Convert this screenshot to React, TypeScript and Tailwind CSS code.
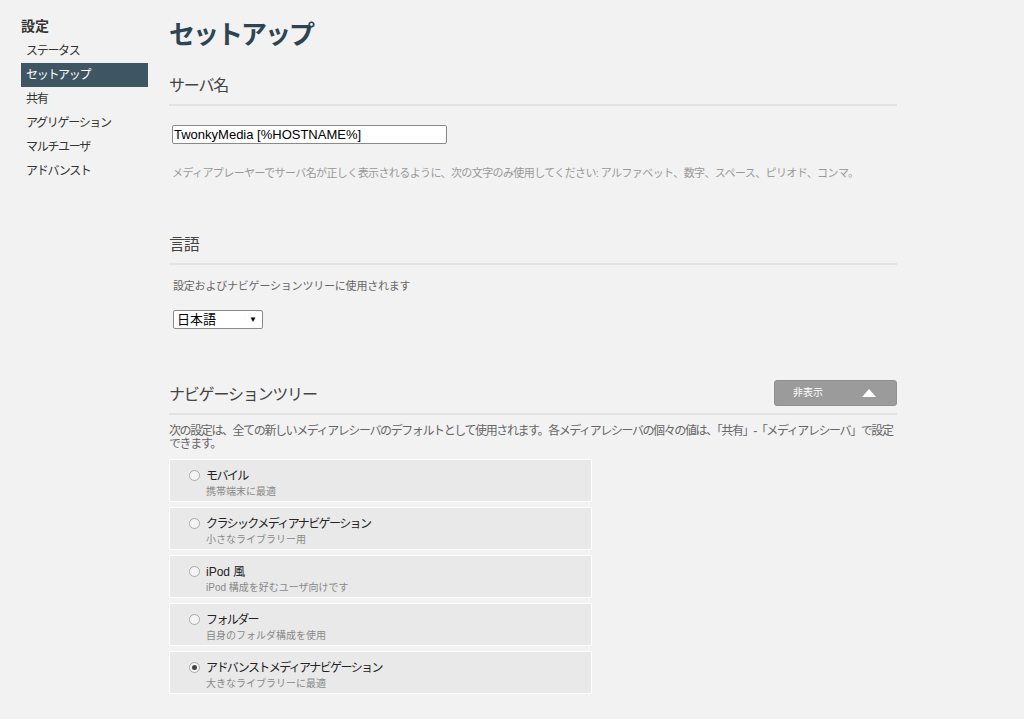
import { useState } from 'react';

const font = { fontFamily: '"Liberation Sans", "Noto Sans CJK JP", sans-serif' };

const navItems = ['ステータス', 'セットアップ', '共有', 'アグリゲーション', 'マルチユーザ', 'アドバンスト'];

const treeOptions = [
  { label: 'モバイル', sub: '携帯端末に最適' },
  { label: 'クラシックメディアナビゲーション', sub: '小さなライブラリー用' },
  { label: 'iPod 風', sub: 'iPod 構成を好むユーザ向けです' },
  { label: 'フォルダー', sub: '自身のフォルダ構成を使用' },
  { label: 'アドバンストメディアナビゲーション', sub: '大きなライブラリーに最適' },
];

const SectionHeader = ({ title, children }: { title: string; children?: React.ReactNode }) => (
  <div className="flex items-center justify-between border-b-2 border-[#e2e2e2] h-[38px] w-[728px]">
    <h2 className="text-[16px] text-[#444] leading-none tracking-[-1.2px]">{title}</h2>
    {children}
  </div>
);

export default function App() {
  const [selected, setSelected] = useState(4);
  const [serverName, setServerName] = useState('TwonkyMedia [%HOSTNAME%]');

  return (
    <div className="min-h-[719px] bg-[#f2f2f2] flex" style={font}>
      {/* Sidebar */}
      <div className="w-[148px] pl-[21px] pt-[17px] shrink-0">
        <div className="text-[14px] font-bold text-[#333] leading-[18px] mb-[4px]">設定</div>
        {navItems.map((item) => (
          <div
            key={item}
            className={`h-[24px] pl-[5px] flex items-center text-[12px] tracking-[-1.3px] ${
              item === 'セットアップ' ? 'bg-[#3e5563] text-white' : 'text-[#333]'
            }`}
          >
            {item}
          </div>
        ))}
      </div>

      {/* Main */}
      <div className="pl-[21px] pt-[17px]">
        <h1 className="text-[26px] font-bold text-[#2f4452] leading-[36px] tracking-[-2px]">セットアップ</h1>

        <div className="mt-[15px]">
          <SectionHeader title="サーバ名" />
          <div className="pl-[3px] pt-[16px]">
            <input
              value={serverName}
              onChange={(e) => setServerName(e.target.value)}
              className="w-[275px] h-[19px] border border-[#8a8a8a] rounded-[2px] bg-white px-[1px] text-[13px] text-black outline-none"
              style={font}
            />
            <p className="mt-[20px] text-[11px] text-[#999] leading-[14px] tracking-[-0.6px]">
              メディアプレーヤーでサーバ名が正しく表示されるように、次の文字のみ使用してください: アルファベット、数字、スペース、ピリオド、コンマ。
            </p>
          </div>
        </div>

        <div className="mt-[47px]">
          <SectionHeader title="言語" />
          <div className="pl-[4px] pt-[14px]">
            <p className="text-[11px] text-[#666] leading-[14px] tracking-[-0.2px]">設定およびナビゲーションツリーに使用されます</p>
            <div className="mt-[17px] w-[90px] h-[19px] border border-[#8a8a8a] rounded-[2px] bg-white flex items-center justify-between pl-[3px] pr-[5px]">
              <span className="text-[13px] text-black leading-none">日本語</span>
              <span className="text-[8px] text-black">▼</span>
            </div>
          </div>
        </div>

        <div className="mt-[48px]">
          <SectionHeader title="ナビゲーションツリー">
            <button className="w-[123px] h-[26px] bg-[#9b9b9b] rounded-[3px] border border-[#8f8f8f] flex items-center justify-between pl-[18px] pr-[20px] text-white text-[10px] mb-[5px]">
              <span>非表示</span>
              <svg width="14" height="8" viewBox="0 0 14 8"><path d="M7 0 L14 8 L0 8 Z" fill="white" /></svg>
            </button>
          </SectionHeader>
          <p className="mt-[10px] w-[732px] text-[12px] text-[#666] leading-[13px] tracking-[-1.4px]">
            次の設定は、全ての新しいメディアレシーバのデフォルトとして使用されます。各メディアレシーバの個々の値は、「共有」-「メディアレシーバ」で設定できます。
          </p>
          <div className="mt-[8px] flex flex-col gap-[5px] w-[423px]">
            {treeOptions.map((opt, i) => (
              <label
                key={opt.label}
                className="h-[43px] bg-[#e9e9e9] border border-white flex items-start pl-[19px] pt-[8px] cursor-pointer"
              >
                <span className="mt-[2px] w-[11px] h-[11px] rounded-full border border-[#aaa] bg-[#f4f4f4] flex items-center justify-center shrink-0">
                  {selected === i && <span className="w-[5px] h-[5px] rounded-full bg-[#444]" />}
                </span>
                <input type="radio" className="hidden" checked={selected === i} onChange={() => setSelected(i)} />
                <span className="ml-[6px] flex flex-col">
                  <span
                    className={`text-[12px] text-[#222] leading-[16px] ${
                      opt.label.startsWith('iPod') ? 'tracking-normal' : 'tracking-[-1.6px]'
                    }`}
                  >
                    {opt.label}
                  </span>
                  <span className="text-[10px] text-[#888] leading-[15px]">{opt.sub}</span>
                </span>
              </label>
            ))}
          </div>
        </div>
      </div>
    </div>
  );
}
